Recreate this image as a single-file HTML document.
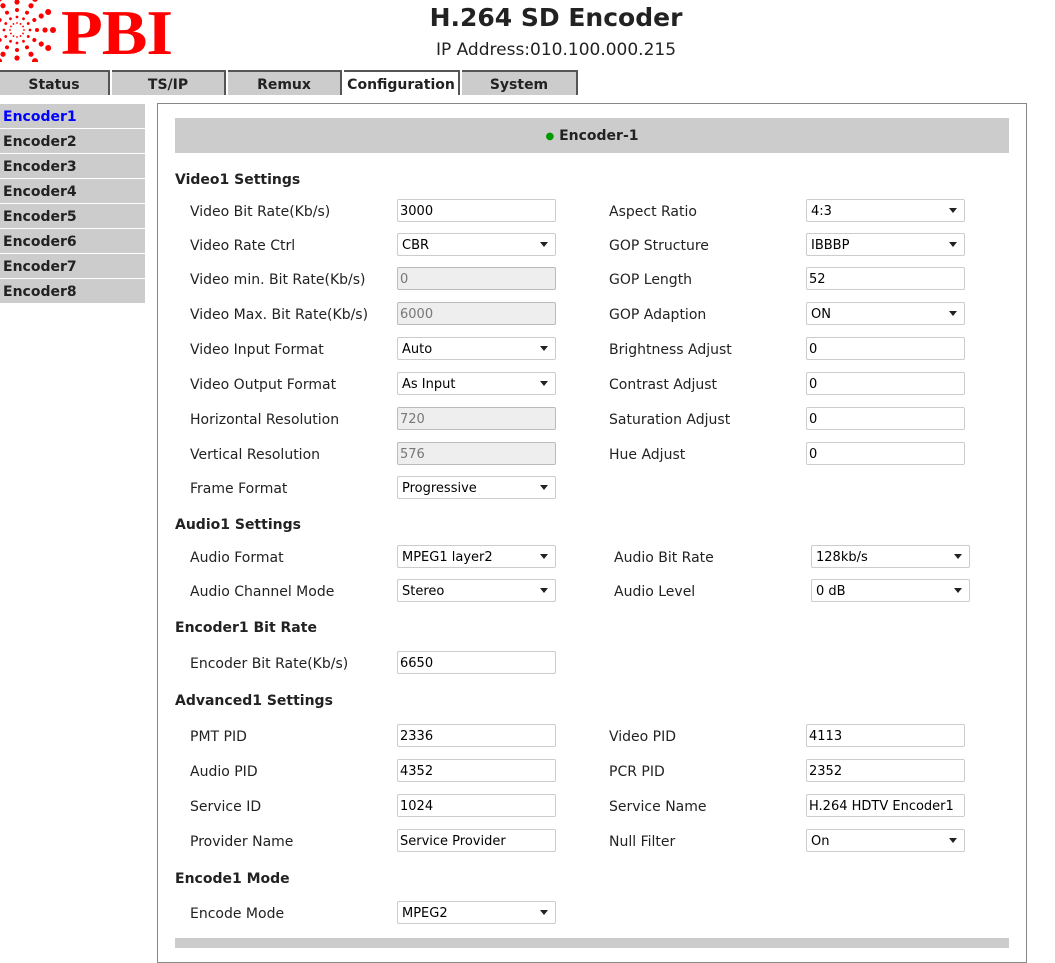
<!DOCTYPE html>
<html><head><meta charset="utf-8"><style>
body{margin:0;width:1055px;height:945px;overflow:hidden;background:#fff;font-family:"DejaVu Sans","Liberation Sans",sans-serif;color:#222;position:relative}
.a{position:absolute;white-space:nowrap}
.title{left:0;width:1112px;text-align:center;top:3px;font-size:25px;font-weight:bold}
.ip{left:0;width:1112px;text-align:center;top:40px;font-size:17px}
.tab{position:absolute;top:70px;height:25px;background:#ccc;border-top:2px solid #555;border-right:2px solid #555;box-sizing:border-box;text-align:center;font-weight:bold;font-size:14px;line-height:27px}
.side{position:absolute;left:0;width:145px;height:24px;background:#ccc;font-weight:bold;font-size:14px;line-height:26px;padding-left:3px;box-sizing:border-box}
.h{position:absolute;left:175px;font-weight:bold;font-size:14px;margin-top:2px}
.l{position:absolute;font-size:14px;margin-top:2px}
.i{position:absolute;width:159px;height:23px;border:1px solid #ccc;border-radius:2px;box-sizing:border-box;background:#fff;font-size:13px;line-height:23px;padding-left:2px;color:#000}
.d{background:#eee;color:#777;border-color:#bbb}
.s{padding-left:4px}
.s:after{content:"";position:absolute;right:7px;top:8px;border-left:4px solid transparent;border-right:4px solid transparent;border-top:5px solid #222}
</style></head><body>
<svg class="a" style="left:0;top:0" width="60" height="62">
<defs><g id="sp" fill="#f00"><circle cx="24" cy="30" r="0.9"/><circle cx="30" cy="30" r="1.4"/><circle cx="37" cy="30" r="2"/><circle cx="45" cy="30" r="2.6"/><circle cx="53" cy="30" r="3"/></g></defs>
<use href="#sp"/><use href="#sp" transform="rotate(30 17 30)"/><use href="#sp" transform="rotate(60 17 30)"/><use href="#sp" transform="rotate(90 17 30)"/><use href="#sp" transform="rotate(120 17 30)"/><use href="#sp" transform="rotate(150 17 30)"/><use href="#sp" transform="rotate(180 17 30)"/><use href="#sp" transform="rotate(210 17 30)"/><use href="#sp" transform="rotate(240 17 30)"/><use href="#sp" transform="rotate(270 17 30)"/><use href="#sp" transform="rotate(300 17 30)"/><use href="#sp" transform="rotate(330 17 30)"/>
</svg>
<div class="a" style="left:61px;top:-4px;font-family:'Liberation Serif',serif;font-weight:bold;font-size:64px;color:#f00;letter-spacing:-1px;transform:scaleX(1.07);transform-origin:left">PBI</div>
<div class="a title">H.264 SD Encoder</div>
<div class="a ip">IP Address:010.100.000.215</div>

<div class="tab" style="left:0;width:110px">Status</div>
<div class="tab" style="left:112px;width:114px">TS/IP</div>
<div class="tab" style="left:228px;width:114px">Remux</div>
<div class="tab" style="left:344px;width:116px;background:#fff">Configuration</div>
<div class="tab" style="left:462px;width:116px">System</div>

<div class="side" style="top:104px;color:#00f">Encoder1</div>
<div class="side" style="top:129px">Encoder2</div>
<div class="side" style="top:154px">Encoder3</div>
<div class="side" style="top:179px">Encoder4</div>
<div class="side" style="top:204px">Encoder5</div>
<div class="side" style="top:229px">Encoder6</div>
<div class="side" style="top:254px">Encoder7</div>
<div class="side" style="top:279px">Encoder8</div>

<div class="a" style="left:157px;top:103px;width:870px;height:860px;border:1px solid #888;box-sizing:border-box"></div>
<div class="a" style="left:175px;top:118px;width:834px;height:35px;background:#ccc;text-align:center;line-height:37px;font-weight:bold;font-size:14px"><span style="color:#090;font-size:10px;vertical-align:1px">●</span> Encoder-1</div>
<div class="a" style="left:175px;top:938px;width:834px;height:10px;background:#ccc"></div>

<div class="h" style="top:170px">Video1 Settings</div>
<div class="l" style="left:190px;top:202px">Video Bit Rate(Kb/s)</div><div class="i" style="left:397px;top:199px">3000</div>
<div class="l" style="left:190px;top:236px">Video Rate Ctrl</div><div class="i s" style="left:397px;top:233px">CBR</div>
<div class="l" style="left:190px;top:270px">Video min. Bit Rate(Kb/s)</div><div class="i d" style="left:397px;top:267px">0</div>
<div class="l" style="left:190px;top:305px">Video Max. Bit Rate(Kb/s)</div><div class="i d" style="left:397px;top:302px">6000</div>
<div class="l" style="left:190px;top:340px">Video Input Format</div><div class="i s" style="left:397px;top:337px">Auto</div>
<div class="l" style="left:190px;top:375px">Video Output Format</div><div class="i s" style="left:397px;top:372px">As Input</div>
<div class="l" style="left:190px;top:410px">Horizontal Resolution</div><div class="i d" style="left:397px;top:407px">720</div>
<div class="l" style="left:190px;top:445px">Vertical Resolution</div><div class="i d" style="left:397px;top:442px">576</div>
<div class="l" style="left:190px;top:479px">Frame Format</div><div class="i s" style="left:397px;top:476px">Progressive</div>

<div class="l" style="left:609px;top:202px">Aspect Ratio</div><div class="i s" style="left:806px;top:199px">4:3</div>
<div class="l" style="left:609px;top:236px">GOP Structure</div><div class="i s" style="left:806px;top:233px">IBBBP</div>
<div class="l" style="left:609px;top:270px">GOP Length</div><div class="i" style="left:806px;top:267px">52</div>
<div class="l" style="left:609px;top:305px">GOP Adaption</div><div class="i s" style="left:806px;top:302px">ON</div>
<div class="l" style="left:609px;top:340px">Brightness Adjust</div><div class="i" style="left:806px;top:337px">0</div>
<div class="l" style="left:609px;top:375px">Contrast Adjust</div><div class="i" style="left:806px;top:372px">0</div>
<div class="l" style="left:609px;top:410px">Saturation Adjust</div><div class="i" style="left:806px;top:407px">0</div>
<div class="l" style="left:609px;top:445px">Hue Adjust</div><div class="i" style="left:806px;top:442px">0</div>

<div class="h" style="top:515px">Audio1 Settings</div>
<div class="l" style="left:190px;top:548px">Audio Format</div><div class="i s" style="left:397px;top:545px">MPEG1 layer2</div>
<div class="l" style="left:190px;top:582px">Audio Channel Mode</div><div class="i s" style="left:397px;top:579px">Stereo</div>
<div class="l" style="left:614px;top:548px">Audio Bit Rate</div><div class="i s" style="left:811px;top:545px">128kb/s</div>
<div class="l" style="left:614px;top:582px">Audio Level</div><div class="i s" style="left:811px;top:579px">0 dB</div>

<div class="h" style="top:618px">Encoder1 Bit Rate</div>
<div class="l" style="left:190px;top:654px">Encoder Bit Rate(Kb/s)</div><div class="i" style="left:397px;top:651px">6650</div>

<div class="h" style="top:691px">Advanced1 Settings</div>
<div class="l" style="left:190px;top:727px">PMT PID</div><div class="i" style="left:397px;top:724px">2336</div>
<div class="l" style="left:190px;top:762px">Audio PID</div><div class="i" style="left:397px;top:759px">4352</div>
<div class="l" style="left:190px;top:797px">Service ID</div><div class="i" style="left:397px;top:794px">1024</div>
<div class="l" style="left:190px;top:832px">Provider Name</div><div class="i" style="left:397px;top:829px">Service Provider</div>
<div class="l" style="left:609px;top:727px">Video PID</div><div class="i" style="left:806px;top:724px">4113</div>
<div class="l" style="left:609px;top:762px">PCR PID</div><div class="i" style="left:806px;top:759px">2352</div>
<div class="l" style="left:609px;top:797px">Service Name</div><div class="i" style="left:806px;top:794px">H.264 HDTV Encoder1</div>
<div class="l" style="left:609px;top:832px">Null Filter</div><div class="i s" style="left:806px;top:829px">On</div>

<div class="h" style="top:869px">Encode1 Mode</div>
<div class="l" style="left:190px;top:904px">Encode Mode</div><div class="i s" style="left:397px;top:901px">MPEG2</div>
</body></html>
